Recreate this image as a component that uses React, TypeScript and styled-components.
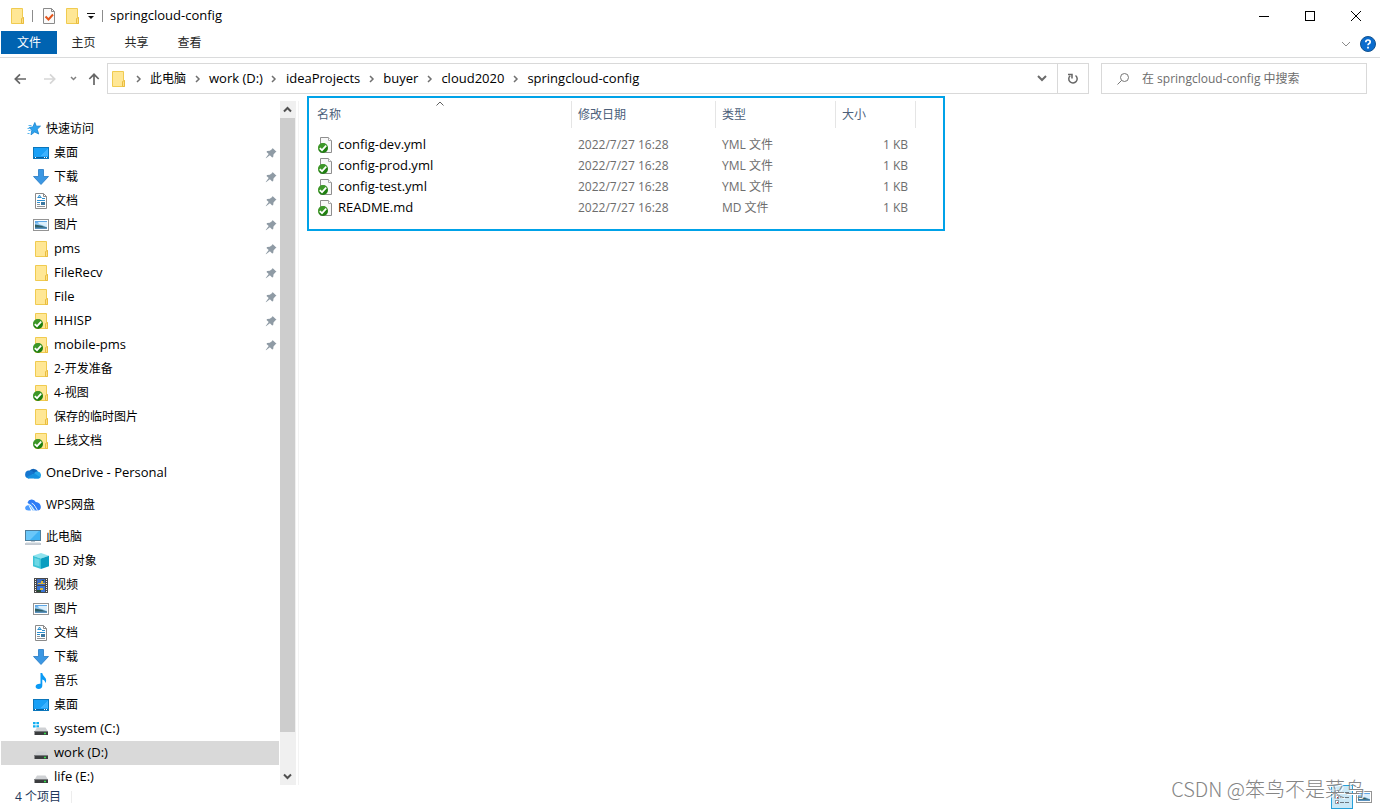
import React from "react";
import styled, { createGlobalStyle, css } from "styled-components";

const GlobalStyle = createGlobalStyle`
  *, *::before, *::after { box-sizing: border-box; }
  html, body { margin: 0; padding: 0; background: #fff; }
  body, button, input, table {
    font-family: "Open Sans", "Noto Sans CJK SC", sans-serif;
    font-size: 12px;
    line-height: 16px;
    color: #000;
  }
  button { border: 0; padding: 0; background: none; }
  a { color: inherit; text-decoration: none; }
  svg { display: block; flex: none; }
`;

const isLatin = (s: string) => /^[\x00-\x7f]*$/.test(s);

const Window = styled.div`
  display: flex;
  flex-direction: column;
  height: 100vh;
  overflow: hidden;
  background: #fff;
`;

const Label = styled.span<{ $latin?: boolean }>`
  display: block;
  padding-bottom: ${(p) => (p.$latin ? 2 : 0)}px;
  font-size: ${(p) => (p.$latin ? 13 : 12)}px;
  line-height: 16px;
  white-space: nowrap;
`;

const Text = ({ children }: { children: string }) => (
  <Label $latin={isLatin(children)}>{children}</Label>
);

/* ---------- title bar ---------- */
const TitleBar = styled.header`
  display: flex;
  align-items: center;
  height: 31px;
  flex: none;
  padding: 0 1px 0 9px;
`;
const Divider = styled.span<{ $tone?: string }>`
  width: 1px;
  height: 12px;
  background: ${(p) => p.$tone || "#8c8c8c"};
`;
const QuickAccess = styled.div`
  display: flex;
  align-items: center;
  gap: 7px;
`;
const QuickButton = styled.button`
  display: flex;
`;
const Title = styled.h1`
  margin: 0 0 0 7px;
  padding-bottom: 2px;
  font-weight: 400;
  font-size: 13px;
  line-height: 16px;
  flex: 1;
`;
const CaptionButton = styled.button`
  display: flex;
  width: 46px;
  height: 31px;
  align-items: center;
  justify-content: center;
`;

/* ---------- ribbon ---------- */
const Ribbon = styled.nav`
  display: flex;
  height: 27px;
  flex: none;
  padding: 0 4px 3px 1px;
  border-bottom: 1px solid #dadbdc;
`;
const Tab = styled.button<{ $file?: boolean }>`
  width: ${(p) => (p.$file ? 56 : 53)}px;
  height: 23px;
  padding-top: 1px;
  color: ${(p) => (p.$file ? "#fff" : "#262626")};
  background: ${(p) => (p.$file ? "#0063b1" : "transparent")};
`;
const RibbonEnd = styled.div`
  display: flex;
  align-items: center;
  gap: 9px;
  height: 26px;
  margin-left: auto;
`;

/* ---------- address row ---------- */
const AddressRow = styled.div`
  display: flex;
  flex: none;
  padding: 5px 13px 7px 10px;
`;
const NavButtons = styled.div`
  display: flex;
  gap: 10px;
  margin-right: 6px;
`;
const NavButton = styled.button<{ $w: number }>`
  display: flex;
  width: ${(p) => p.$w}px;
  height: 31px;
  align-items: center;
  justify-content: center;
`;
const boxed = css`
  display: flex;
  align-items: center;
  height: 31px;
  border: 1px solid #d9d9d9;
`;
const AddressBox = styled.div`
  ${boxed}
  flex: 1;
  margin-right: 12px;
  padding-left: 2px;
`;
const Crumbs = styled.ol`
  display: flex;
  flex: 1;
  margin: 0 0 0 1px;
  padding: 0;
  list-style: none;
`;
const Crumb = styled.li`
  display: flex;
  align-items: center;
`;
const CrumbSep = styled.span`
  display: flex;
  width: 23px;
  justify-content: center;
`;
const AddressButton = styled.button<{ $line?: boolean }>`
  display: flex;
  width: 31px;
  height: 29px;
  align-items: center;
  justify-content: center;
  border-left: ${(p) => (p.$line ? "1px solid #d9d9d9" : "0")};
`;
const SearchBox = styled.label`
  ${boxed}
  width: 266px;
  padding-left: 14px;
  gap: 12px;
`;
const SearchInput = styled.input`
  flex: 1;
  min-width: 0;
  padding: 0;
  border: 0;
  outline: 0;
  background: none;
  &::placeholder { color: #6d6d6d; opacity: 1; }
`;

/* ---------- body ---------- */
const Main = styled.div`
  display: flex;
  flex: 1;
  min-height: 0;
`;
const Side = styled.aside`
  display: flex;
  flex: none;
  width: 299px;
  padding: 0 2px 0 1px;
  border-right: 1px solid #f3f3f3;
`;
const Tree = styled.nav`
  flex: 1;
  min-width: 0;
  overflow: hidden;
  padding-top: 16px;
`;
const Group = styled.section`
  margin-bottom: 8px;
`;
const Item = styled.a<{ $root?: boolean; $selected?: boolean }>`
  display: flex;
  align-items: center;
  gap: 5px;
  height: 24px;
  margin-right: 1px;
  padding: 0 2px 0 ${(p) => (p.$root ? 24 : 32)}px;
  background: ${(p) => (p.$selected ? "#d9d9d9" : "transparent")};
`;
const PinSlot = styled.span`
  margin-left: auto;
`;
const ScrollBar = styled.div`
  display: flex;
  flex-direction: column;
  flex: none;
  width: 16px;
  background: #f0f0f0;
`;
const ScrollButton = styled.button`
  display: flex;
  height: 17px;
  padding-right: 1px;
  align-items: center;
  justify-content: center;
`;
const ScrollTrack = styled.div`
  display: flex;
  flex-direction: column;
  flex: 1;
`;
const Thumb = styled.div`
  flex: 17;
  margin-right: 1px;
  background: #cdcdcd;
`;
const ThumbRest = styled.div`
  flex: 1;
`;

const Content = styled.main`
  flex: 1;
  min-width: 0;
  padding-left: 8px;
`;
const Highlight = styled.div`
  width: 638px;
  margin-top: -5px;
  padding: 3px 0 11px;
  border: 2px solid #00a2e8;
`;
const Table = styled.table`
  table-layout: fixed;
  width: 607px;
  border-collapse: separate;
  border-spacing: 0;
  tbody::before { content: ""; display: block; height: 6px; }
`;
const Th = styled.th<{ $w: number; $first?: boolean }>`
  width: ${(p) => p.$w}px;
  height: 27px;
  padding: 0 0 0 ${(p) => (p.$first ? 8 : 6)}px;
  border-right: 1px solid #e5e5e5;
  text-align: left;
  font-weight: 400;
  color: #4c607a;
  position: relative;
`;
const SortMark = styled.span`
  position: absolute;
  top: 0;
  left: 50%;
  transform: translateX(-50%);
`;
const Td = styled.td<{ $first?: boolean; $right?: boolean }>`
  height: 21px;
  padding: 0 8px 0 ${(p) => (p.$first ? 9 : 6)}px;
  text-align: ${(p) => (p.$right ? "right" : "left")};
  color: #6d6d6d;
  white-space: nowrap;
`;
const FileLink = styled.a`
  display: flex;
  align-items: center;
  gap: 4px;
  color: #000;
`;

/* ---------- status bar ---------- */
const StatusBar = styled.footer`
  display: flex;
  align-items: center;
  flex: none;
  height: 24px;
  padding: 0 5px 0 15px;
  color: #1e395b;
  position: relative;
`;
const Count = styled.span`
  flex: 1;
  display: flex;
  align-items: center;
  gap: 10px;
`;
const ViewButton = styled.button<{ $on?: boolean }>`
  display: flex;
  align-items: center;
  justify-content: center;
  width: 22px;
  height: 24px;
  border: 1px solid ${(p) => (p.$on ? "#26a0da" : "transparent")};
  background: ${(p) => (p.$on ? "#cbe8f6" : "transparent")};
`;
const Watermark = styled.span`
  position: absolute;
  right: 15px;
  bottom: 5px;
  font-family: "Noto Sans CJK SC", sans-serif;
  font-weight: 300;
  font-size: 20px;
  line-height: 30px;
  color: #858585;
  text-shadow: 1px 1px 0 #fff;
  white-space: nowrap;
  pointer-events: none;
`;

/* ---------- icons ---------- */
const Svg = ({ children, w = 16, h = 16, crisp }: { children: React.ReactNode; w?: number; h?: number; crisp?: boolean }) => (
  <svg width={w} height={h} viewBox={`0 0 ${w} ${h}`} fill="none" aria-hidden="true" shapeRendering={crisp ? "crispEdges" : "auto"}>
    {children}
  </svg>
);

const Badge = () => (
  <g>
    <circle cx="5" cy="11" r="5" fill="#1f7f10" />
    <path d="M5 6A5 5 0 0 0 .6 13.400Q6 11 9.400 8.600A5 5 0 0 0 5 6Z" fill="#5cb040" opacity=".5" />
    <path d="M1.800 11.200l2.200 2 4.200-4.500" stroke="#fff" strokeWidth="1.700" />
  </g>
);

const Folder = ({ ok }: { ok?: boolean }) => (
  <Svg>
    <path d="M2.500 .5h11v9h1v6h-12z" fill="#ffe795" stroke="#f0cb50" />
    <path d="M12.500 15.500v-5l2-1v6z" fill="#ffe084" stroke="#e9bd40" />
    {ok && <Badge />}
  </Svg>
);
const FileIcon = () => (
  <Svg>
    <path d="M2.500 .5h8l3 3v12h-11z" fill="#f8f8f8" stroke="#8e8e8e" />
    <path d="M10.500 .5v3h3" fill="#fff" stroke="#a8a8a8" />
    <Badge />
  </Svg>
);
const CheckPage = () => (
  <Svg w={17}>
    <path d="M3.500 .5h8l3 3v12h-11z" fill="#fafafa" stroke="#8a8a8a" />
    <path d="M11.500 .5v3h3" stroke="#8a8a8a" />
    <path d="M5.500 8.500l3 3 4.500-5" stroke="#e2541b" strokeWidth="2" />
  </Svg>
);
const Star = () => (
  <Svg>
    <path d="M9.800 1.500l1.500 3.700 4.200-.1-3.300 3.200 1.500 4.700-4-2-3.700 2.800.8-4.600-2.600-2.700 3.700-.6z" fill="#2ea3ee" stroke="#1583cf" strokeWidth=".8" />
    <path d="M3.500 4.500h3M2.500 7.500h2M3.500 9.500h2M2.500 12.500h2" stroke="#57b6f0" />
  </Svg>
);
const Desktop = () => (
  <Svg crisp>
    <rect x=".5" y="2.500" width="15" height="11" fill="#19a0f7" stroke="#0b76bb" />
    <path d="M15 3v8L7 11z" fill="#3cb2ff" />
    <path d="M1 12.500h14" stroke="#0a5f9b" />
    <path d="M2 12.500h1M11 12.500h1M13 12.500h1" stroke="#fff" />
  </Svg>
);
const Download = () => (
  <Svg>
    <path d="M5.500 .5h5v7h5L8 15.500.5 7.500h5z" fill="#3b97e3" stroke="#2379c4" strokeWidth=".8" />
  </Svg>
);
const Doc = () => (
  <Svg>
    <path d="M2.500 .5h8l3 3v12h-11z" fill="#fff" stroke="#8a8a8a" />
    <path d="M10.500 .5v3h3" stroke="#8a8a8a" />
    <path d="M5 5l1.500-3L8 5M4.500 4.500h4M9 5.500h3M4 7.500h8M4 9.500h3" stroke="#2d8fcf" />
    <path d="M4 11.500h3M4 13.500h8" stroke="#8f9499" />
    <rect x="8" y="9" width="4" height="3" fill="#3d78a0" />
  </Svg>
);
const Picture = () => (
  <Svg>
    <rect x=".5" y="2.500" width="15" height="11" fill="#fff" stroke="#949494" />
    <rect x="2" y="4" width="12" height="8" fill="#8ec6f2" />
    <path d="M2 6q4-1.500 12 2.500V4H2z" fill="#5ea7e6" />
    <path d="M5 5h9v5L6 7z" fill="#dceffb" />
    <path d="M2 7.500q5 .5 12 3V12H2z" fill="#2f5f66" />
    <path d="M2 10.500h12V12H2z" fill="#5b93c0" />
  </Svg>
);
const Cloud = () => (
  <Svg>
    <path d="M4.500 6A5 5 0 0 1 13 6.500L8 10z" fill="#0f64b8" />
    <path d="M3.700 13.500A3.700 3.700 0 0 1 4.500 5.600Q7 5.500 9 7.500L4 13.500z" fill="#1576cf" />
    <path d="M9.500 7.500A4 4 0 0 1 13 6.500a3.600 3.600 0 0 1 .5 7H9z" fill="#28a8ea" />
    <path d="M1.500 12.200L9 8.200l6.400 4a3 3 0 0 1-2.400 1.300H3.700a3.500 3.500 0 0 1-2.200-1.300z" fill="#1490df" />
  </Svg>
);
const WpsCloud = () => (
  <Svg>
    <path d="M2.500 5.500A4.500 4.500 0 0 1 10.800 5Q15.500 5.500 15.900 10q0 3-2.900 3.500h-2.500z" fill="#2f7cf5" />
    <path d="M2.800 6.500Q6 6 7.500 9l2.700 4.500H7.500L5 9.500z" fill="#6db5ff" />
    <path d="M3.500 8Q.3 8.500.1 11q.2 2.500 3.400 2.500H6z" fill="#4c9cff" />
    <path d="M3 7.500q2.300 0 3.500 2l2.500 4M6.700 6.200Q9 7 10.200 9.500l2.300 4" stroke="#fff" strokeWidth=".9" />
  </Svg>
);
const Computer = () => (
  <Svg>
    <rect x=".5" y="1.500" width="15" height="10" fill="#3fb2f3" stroke="#4d7d9b" />
    <path d="M1 2h13L5 11H1z" fill="#7dd0fb" opacity=".7" />
    <path d="M6 12.500h4" stroke="#b9c6d0" />
    <path d="M0 15h16" stroke="#8794a3" />
    <path d="M1 14h14" stroke="#cbd4dc" />
  </Svg>
);
const Cube = () => (
  <Svg>
    <path d="M0 2.800L8 0l8 2.800L8 5.500z" fill="#8fe3ee" />
    <path d="M0 2.800l8 2.700V16l-8-2.800z" fill="#3cc3d6" />
    <path d="M16 2.800L8 5.500V16l8-2.800z" fill="#0a9dc0" />
    <path d="M1.500 5l5 1.500v7l-5-1.500z" fill="#6cd8e5" />
  </Svg>
);
const Film = () => (
  <Svg crisp>
    <rect x="1" y="1" width="14" height="15" fill="#4a4a4a" />
    <rect x="4" y="2" width="8" height="6" fill="#3c6bc0" />
    <rect x="4" y="9" width="8" height="6" fill="#3975d8" />
    <path d="M5 6h3V4h2v2h2v1H5zM7 11h3v2H7z" fill="#d9b63c" />
    <path d="M4 13h4v2H4zM9 3h2v1H9z" fill="#274a35" />
    <path d="M2.500 2v14M13.500 2v14" stroke="#f4f4f4" strokeDasharray="1 1" />
  </Svg>
);
const Music = () => (
  <Svg>
    <path d="M7.500 0h1.700q.5 2.500 2.600 4.200 2.400 2.300.6 6-.2-3-3.100-3.800v6q0 3.200-3.700 3.600-3-.2-3-2.500.4-3 4.900-2.700z" fill="#0a9af5" />
  </Svg>
);
const Drive = ({ win }: { win?: boolean }) => (
  <Svg>
    {win && <path d="M0 1h2.600v2.300H0zM3.400 1H6v2.300H3.400zM0 4.200h2.600v2.300H0zM3.400 4.200H6v2.300H3.400z" fill="#12aef0" />}
    <path d="M4 6.500h8.500l2.500 4H1.500z" fill="#cfd1d4" />
    <path d="M1.500 10h13.500v4H1.500z" fill="#3b3d3f" />
    <path d="M1.500 10h13.500v1H1.500z" fill="#77797c" />
    <path d="M11 12.500h2" stroke="#35e04a" strokeWidth="1.400" />
  </Svg>
);
const Pin = () => (
  <Svg w={12} h={12}>
    <path d="M7.500 1l4 3.800-1 .4L8.500 7.500l-.3 2.500-1 .5-2.300-2.200L1 11.300.7 11l3-4L1.500 4.900l.6-1 2.700-.2L7.200 2z" fill="#8f9ba5" />
  </Svg>
);
const Chevron = ({ d, w, h, color = "#6b6b6b", sw = 2 }: { d: string; w: number; h: number; color?: string; sw?: number }) => (
  <Svg w={w} h={h}><path d={d} stroke={color} strokeWidth={sw} /></Svg>
);
const RightMark = () => <Chevron d="M1 1l3 3-3 3" w={6} h={8} color="#707070" sw={1.5} />;

const icons: Record<string, React.ReactNode> = {
  folder: <Folder />,
  okFolder: <Folder ok />,
  star: <Star />,
  desktop: <Desktop />,
  download: <Download />,
  doc: <Doc />,
  picture: <Picture />,
  cloud: <Cloud />,
  wps: <WpsCloud />,
  computer: <Computer />,
  cube: <Cube />,
  film: <Film />,
  music: <Music />,
  drive: <Drive />,
  winDrive: <Drive win />,
};

type Node = { icon: string; text: string; pin?: boolean; selected?: boolean };
const groups: { root: Node; items: Node[] }[] = [
  {
    root: { icon: "star", text: "快速访问" },
    items: [
      { icon: "desktop", text: "桌面", pin: true },
      { icon: "download", text: "下载", pin: true },
      { icon: "doc", text: "文档", pin: true },
      { icon: "picture", text: "图片", pin: true },
      { icon: "folder", text: "pms", pin: true },
      { icon: "folder", text: "FileRecv", pin: true },
      { icon: "folder", text: "File", pin: true },
      { icon: "okFolder", text: "HHISP", pin: true },
      { icon: "okFolder", text: "mobile-pms", pin: true },
      { icon: "folder", text: "2-开发准备" },
      { icon: "okFolder", text: "4-视图" },
      { icon: "folder", text: "保存的临时图片" },
      { icon: "okFolder", text: "上线文档" },
    ],
  },
  { root: { icon: "cloud", text: "OneDrive - Personal" }, items: [] },
  { root: { icon: "wps", text: "WPS网盘" }, items: [] },
  {
    root: { icon: "computer", text: "此电脑" },
    items: [
      { icon: "cube", text: "3D 对象" },
      { icon: "film", text: "视频" },
      { icon: "picture", text: "图片" },
      { icon: "doc", text: "文档" },
      { icon: "download", text: "下载" },
      { icon: "music", text: "音乐" },
      { icon: "desktop", text: "桌面" },
      { icon: "winDrive", text: "system (C:)" },
      { icon: "drive", text: "work (D:)", selected: true },
      { icon: "drive", text: "life (E:)" },
    ],
  },
];

const crumbs = ["此电脑", "work (D:)", "ideaProjects", "buyer", "cloud2020", "springcloud-config"];

const files = [
  { name: "config-dev.yml", type: "YML 文件" },
  { name: "config-prod.yml", type: "YML 文件" },
  { name: "config-test.yml", type: "YML 文件" },
  { name: "README.md", type: "MD 文件" },
];

const TreeItem = ({ node, root }: { node: Node; root?: boolean }) => (
  <Item href="#" $root={root} $selected={node.selected}>
    {icons[node.icon]}
    <Text>{node.text}</Text>
    {node.pin && <PinSlot><Pin /></PinSlot>}
  </Item>
);

export default function App() {
  return (
    <Window>
      <GlobalStyle />
      <TitleBar>
        <QuickAccess>
          <Folder />
          <Divider />
          <QuickButton aria-label="属性"><CheckPage /></QuickButton>
          <QuickButton aria-label="新建文件夹"><Folder /></QuickButton>
          <QuickButton aria-label="自定义快速访问工具栏">
            <Svg w={8} h={8}><path d="M0 1.500h8" stroke="#111" /><path d="M1 4h6L4 7z" fill="#111" /></Svg>
          </QuickButton>
          <Divider />
        </QuickAccess>
        <Title>springcloud-config</Title>
        <CaptionButton aria-label="最小化"><Svg w={10} h={10} crisp><path d="M0 5.500h10" stroke="#000" /></Svg></CaptionButton>
        <CaptionButton aria-label="最大化"><Svg w={10} h={10} crisp><path d="M.5.5h9v9h-9z" stroke="#000" /></Svg></CaptionButton>
        <CaptionButton aria-label="关闭"><Svg w={10} h={10}><path d="M0 0l10 10M10 0L0 10" stroke="#000" /></Svg></CaptionButton>
      </TitleBar>

      <Ribbon>
        <Tab $file>文件</Tab>
        <Tab>主页</Tab>
        <Tab>共享</Tab>
        <Tab>查看</Tab>
        <RibbonEnd>
          <QuickButton aria-label="展开功能区"><Chevron d="M1 1l4 4 4-4" w={10} h={6} color="#8b8b8b" sw={1} /></QuickButton>
          <QuickButton aria-label="帮助">
            <Svg>
              <circle cx="8" cy="8" r="7.500" fill="#0a6cce" stroke="#12528f" />
              <path d="M5.800 6.200Q5.800 4 8 4t2.200 1.900Q10.200 7 8.900 7.700 8 8.200 8 9.300" stroke="#fff" strokeWidth="1.700" />
              <path d="M7.100 10.700h1.800v1.800H7.100z" fill="#fff" />
            </Svg>
          </QuickButton>
        </RibbonEnd>
      </Ribbon>

      <AddressRow>
        <NavButtons>
          <NavButton $w={20} aria-label="后退"><Svg w={12} h={12}><path d="M12 6H1.500M6 1.300L1.300 6 6 10.700" stroke="#666" strokeWidth="1.700" /></Svg></NavButton>
          <NavButton $w={20} aria-label="前进"><Svg w={12} h={12}><path d="M0 6h10.500M6 1.300L10.700 6 6 10.700" stroke="#d6d6d6" strokeWidth="1.700" /></Svg></NavButton>
          <NavButton $w={7} aria-label="最近浏览的位置"><Chevron d="M1 1l2.500 2.500L6 1" w={7} h={5} color="#808080" sw={1.5} /></NavButton>
          <NavButton $w={14} aria-label="上移"><Svg w={12} h={12}><path d="M6 12V1.500M1.300 6L6 1.300 10.700 6" stroke="#666" strokeWidth="1.700" /></Svg></NavButton>
        </NavButtons>
        <AddressBox>
          <Folder />
          <Crumbs>
            {crumbs.map((c) => (
              <Crumb key={c}>
                <CrumbSep><RightMark /></CrumbSep>
                <a href="#"><Text>{c}</Text></a>
              </Crumb>
            ))}
          </Crumbs>
          <AddressButton aria-label="上一个位置"><Chevron d="M1 1l4 4 4-4" w={10} h={7} /></AddressButton>
          <AddressButton $line aria-label="刷新">
            <Svg w={12} h={12}>
              <path d="M3.200 2.700A4.200 4.200 0 1 0 8.500 2.500" stroke="#666" strokeWidth="1.500" />
              <path d="M1 1.500h4v4" stroke="#666" strokeWidth="1.500" />
            </Svg>
          </AddressButton>
        </AddressBox>
        <SearchBox>
          <Svg w={14} h={14}>
            <circle cx="8.500" cy="5.500" r="4" stroke="#767676" />
            <path d="M5.500 8.500l-4 4" stroke="#767676" />
          </Svg>
          <SearchInput type="text" aria-label="搜索" placeholder="在 springcloud-config 中搜索" />
        </SearchBox>
      </AddressRow>

      <Main>
        <Side>
          <Tree>
            {groups.map((g) => (
              <Group key={g.root.text}>
                <TreeItem node={g.root} root />
                {g.items.map((n) => <TreeItem key={n.text} node={n} />)}
              </Group>
            ))}
          </Tree>
          <ScrollBar>
            <ScrollButton aria-label="向上滚动"><Chevron d="M1 5.500l3.500-3.500L8 5.500" w={9} h={7} color="#505050" /></ScrollButton>
            <ScrollTrack><Thumb /><ThumbRest /></ScrollTrack>
            <ScrollButton aria-label="向下滚动"><Chevron d="M1 1.500l3.500 3.500L8 1.500" w={9} h={7} color="#505050" /></ScrollButton>
          </ScrollBar>
        </Side>
        <Content>
          <Highlight>
            <Table>
              <thead>
                <tr>
                  <Th $w={263} $first>名称<SortMark><Chevron d="M.5 4.500L4 1l3.500 3.500" w={8} h={5} color="#606060" sw={1} /></SortMark></Th>
                  <Th $w={144}>修改日期</Th>
                  <Th $w={120}>类型</Th>
                  <Th $w={80}>大小</Th>
                </tr>
              </thead>
              <tbody>
                {files.map((f) => (
                  <tr key={f.name}>
                    <Td $first><FileLink href="#"><FileIcon /><Text>{f.name}</Text></FileLink></Td>
                    <Td>2022/7/27 16:28</Td>
                    <Td>{f.type}</Td>
                    <Td $right>1 KB</Td>
                  </tr>
                ))}
              </tbody>
            </Table>
          </Highlight>
        </Content>
      </Main>

      <StatusBar>
        <Count>4 个项目<Divider $tone="#ededed" /></Count>
        <ViewButton $on aria-label="详细信息">
          <Svg crisp>
            <path d="M1.500 1.500h3v3h-3zM1.500 6.500h3v3h-3zM1.500 11.500h3v3h-3z" fill="#fff" stroke="#8c9aa5" />
            <path d="M6 3.500h4M11 3.500h4M6 8.500h4M11 8.500h4M6 13.500h4M11 13.500h4" stroke="#6b7780" />
            <path d="M3 13v1M3 8v1" stroke="#c33" />
          </Svg>
        </ViewButton>
        <ViewButton aria-label="大缩略图"><Picture /></ViewButton>
        <Watermark>CSDN @笨鸟不是菜鸟</Watermark>
      </StatusBar>
    </Window>
  );
}
